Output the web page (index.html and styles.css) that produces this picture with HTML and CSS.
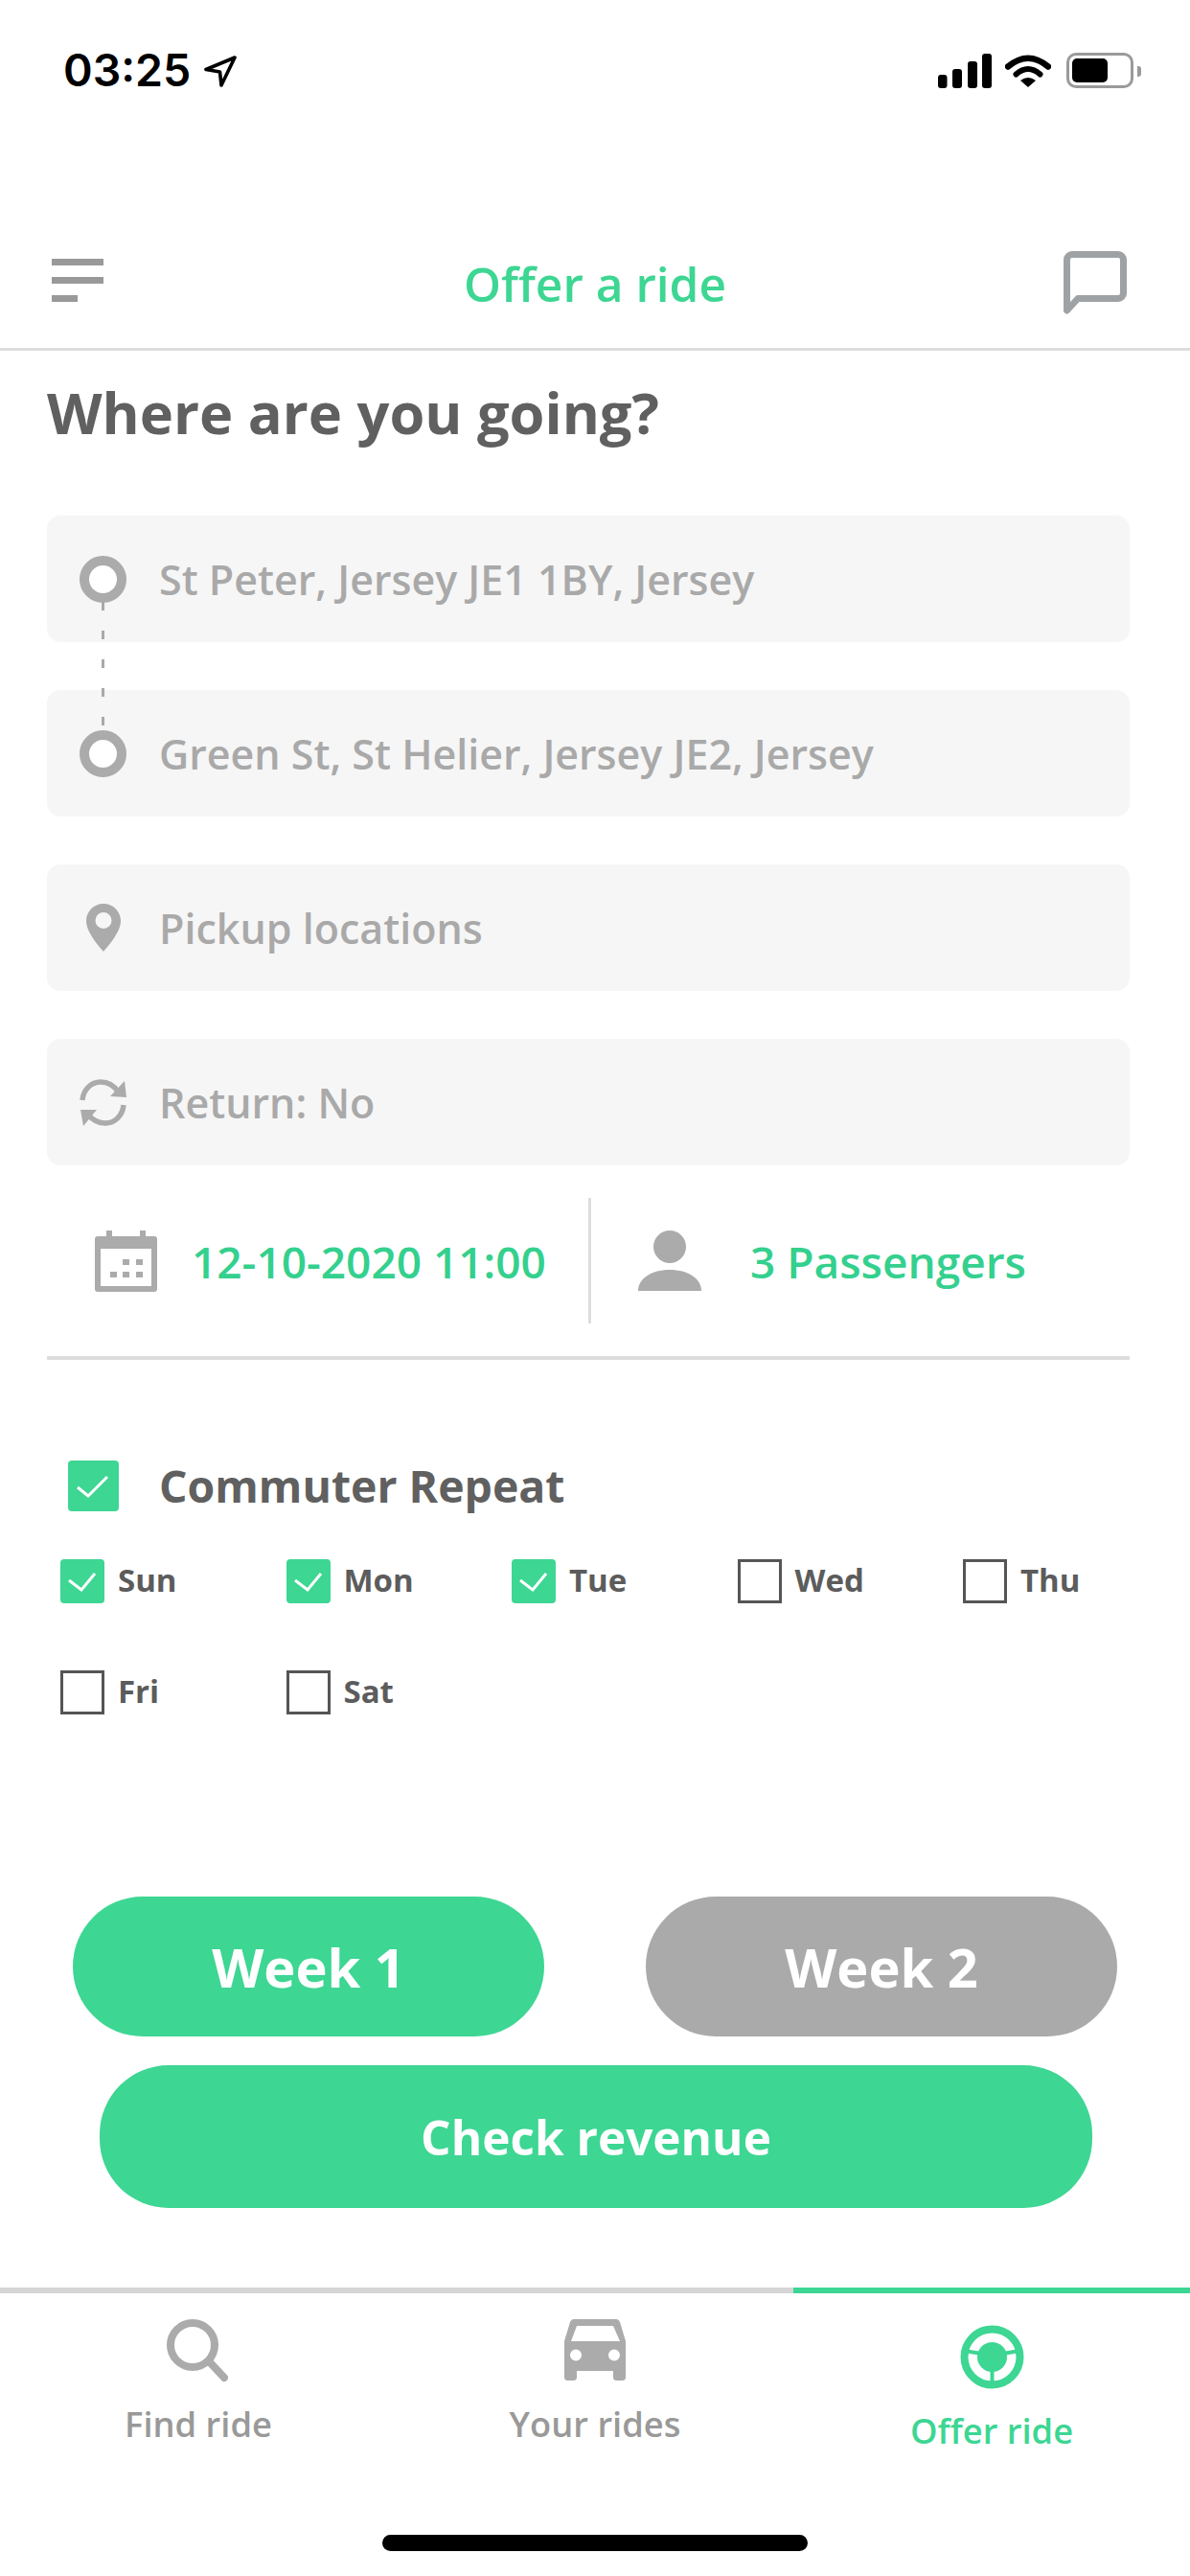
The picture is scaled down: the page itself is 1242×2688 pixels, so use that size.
FILE: index.html
```html
<!DOCTYPE html>
<html lang="en">
<head>
<meta charset="utf-8">
<title>Offer a ride</title>
<link rel="stylesheet" href="styles.css">
</head>
<body>
<div class="screen">
  <div class="status">
    <div class="status-left">
      <span class="time">03:25</span>
      <svg class="ic-loc" viewBox="0 0 34 33"><path d="M32 2 2 14.5l14.5 2.5L18 31Z" fill="none" stroke="#000" stroke-width="3.6" stroke-linejoin="round"/></svg>
    </div>
    <div class="status-right">
      <svg class="ic-signal" viewBox="0 0 57 36"><rect x="0" y="22" width="9.500" height="14" rx="3"/><rect x="15" y="16" width="10" height="20" rx="3"/><rect x="31" y="8" width="10" height="28" rx="3"/><rect x="46" y="0" width="10" height="36" rx="3"/></svg>
      <svg class="ic-wifi" viewBox="0 0 48 34"><path d="M3 12.500Q24-5 45 12.500" fill="none" stroke="#000" stroke-width="6.500" stroke-linecap="round"/><path d="M11.500 20.500Q24 9.500 36.500 20.500" fill="none" stroke="#000" stroke-width="6" stroke-linecap="round"/><path d="M16 27Q24 21 32 27L24 34Z"/></svg>
      <div class="battery"><div class="battery-fill"></div></div>
      <div class="battery-nub"></div>
    </div>
  </div>

  <header class="topbar">
    <div class="menu"><span class="menu-bar"></span><span class="menu-bar"></span><span class="menu-bar short"></span></div>
    <h1 class="title">Offer a ride</h1>
    <svg class="ic-chat" viewBox="0 0 66 66"><path d="M3.500 62V9A5.500 5.500 0 0 1 9 3.500H57A5.500 5.500 0 0 1 62.500 9V44A5.500 5.500 0 0 1 57 49.500H15Z" fill="none" stroke="#9ea2a5" stroke-width="7" stroke-linejoin="round"/></svg>
  </header>

  <main class="content">
    <h2 class="heading">Where are you going?</h2>

    <div class="fields">
      <div class="route-line"></div>
      <div class="field">
        <span class="field-icon"><span class="ring"></span></span>
        <span class="field-text">St Peter, Jersey JE1 1BY, Jersey</span>
      </div>
      <div class="field">
        <span class="field-icon"><span class="ring"></span></span>
        <span class="field-text">Green St, St Helier, Jersey JE2, Jersey</span>
      </div>
      <div class="field">
        <span class="field-icon">
          <svg class="ic-pin" viewBox="0 0 36 50"><path fill-rule="evenodd" fill="#ababab" d="M18 0C8 0 0 8 0 18 0 29 12 43 18 50 24 43 36 29 36 18 36 8 28 0 18 0ZM18 9A8.500 8.500 0 1 1 18 26 8.500 8.500 0 1 1 18 9Z"/></svg>
        </span>
        <span class="field-text">Pickup locations</span>
      </div>
      <div class="field">
        <span class="field-icon">
          <svg class="ic-refresh" viewBox="13 13 49 51"><path d="M16 36C17 25 25 17 35 17 43 17 49 21 53 27" fill="none" stroke="#ababab" stroke-width="5.500"/><path d="M60 16 62 33 45 32Z" fill="#ababab"/><path d="M59 41C58 52 50 60 40 60 32 60 26 56 22 51" fill="none" stroke="#ababab" stroke-width="5.500"/><path d="M14 46 31 46 17 63Z" fill="#ababab"/></svg>
        </span>
        <span class="field-text">Return: No</span>
      </div>
    </div>

    <div class="meta">
      <div class="meta-cell date">
        <svg class="ic-cal" viewBox="0 0 65 64"><path fill-rule="evenodd" fill="#ababab" d="M12 0h6v6h29V0h6v6h9a3 3 0 0 1 3 3v52a3 3 0 0 1-3 3H3a3 3 0 0 1-3-3V9a3 3 0 0 1 3-3h9ZM6 19V58H59V19Z"/><rect x="29" y="30" width="7" height="6" fill="#ababab"/><rect x="43" y="30" width="7" height="6" fill="#ababab"/><rect x="16" y="43" width="7" height="6" fill="#ababab"/><rect x="29" y="43" width="7" height="6" fill="#ababab"/><rect x="43" y="43" width="7" height="6" fill="#ababab"/></svg>
        <span class="meta-text">12-10-2020 11:00</span>
      </div>
      <div class="meta-cell seats">
        <svg class="ic-person" viewBox="0 0 66 63"><circle cx="33" cy="17" r="17" fill="#ababab"/><path d="M0 63C0 50 14 41 33 41 52 41 66 50 66 63Z" fill="#ababab"/></svg>
        <span class="meta-text">3 Passengers</span>
      </div>
    </div>

    <div class="commuter">
      <span class="box box-lg on"><svg viewBox="0 0 53 53"><path d="M10 28 21 37 41 17" fill="none" stroke="#fff" stroke-width="3"/></svg></span>
      <span class="commuter-label">Commuter Repeat</span>
    </div>

    <div class="days">
      <div class="day"><span class="box on"><svg viewBox="0 0 46 46"><path d="M9 22 22 32 36 15" fill="none" stroke="#fff" stroke-width="3"/></svg></span><span class="day-label">Sun</span></div>
      <div class="day"><span class="box on"><svg viewBox="0 0 46 46"><path d="M9 22 22 32 36 15" fill="none" stroke="#fff" stroke-width="3"/></svg></span><span class="day-label">Mon</span></div>
      <div class="day"><span class="box on"><svg viewBox="0 0 46 46"><path d="M9 22 22 32 36 15" fill="none" stroke="#fff" stroke-width="3"/></svg></span><span class="day-label">Tue</span></div>
      <div class="day"><span class="box"></span><span class="day-label">Wed</span></div>
      <div class="day"><span class="box"></span><span class="day-label">Thu</span></div>
      <div class="day"><span class="box"></span><span class="day-label">Fri</span></div>
      <div class="day"><span class="box"></span><span class="day-label">Sat</span></div>
    </div>

    <div class="weeks">
      <div class="btn btn-week green">Week 1</div>
      <div class="btn btn-week grey">Week 2</div>
    </div>
    <div class="btn btn-check green">Check revenue</div>
  </main>

  <nav class="tabs">
    <div class="tab">
      <svg class="ic-search" viewBox="0 0 64 66"><circle cx="27" cy="27" r="23" fill="none" stroke="#ababab" stroke-width="8"/><path d="M45 45 60 61" fill="none" stroke="#ababab" stroke-width="8" stroke-linecap="round"/></svg>
      <span class="tab-label">Find ride</span>
    </div>
    <div class="tab">
      <svg class="ic-car" viewBox="0 0 66 64"><path fill-rule="evenodd" fill="#ababab" d="M11 0H55C57 0 58 1 59 3L65 23V60C65 63 64 64 61 64H56C53 64 52 63 52 60V54H14V60C14 63 13 64 10 64H5C2 64 1 63 1 60V23L7 3C8 1 9 0 11 0ZM14 7 8 23H59L52 7ZM13 31.500A6 6 0 1 0 13 43.500 6 6 0 1 0 13 31.500ZM53 31.500A6 6 0 1 0 53 43.500 6 6 0 1 0 53 31.500Z"/></svg>
      <span class="tab-label">Your rides</span>
    </div>
    <div class="tab active">
      <svg class="ic-wheel" viewBox="0 0 67 67"><circle cx="33.500" cy="33.500" r="29" fill="none" stroke="#3dd693" stroke-width="8"/><circle cx="33.500" cy="33.500" r="15.500" fill="#3dd693"/><path d="M5 27 22 30M62 27 45 30M33.500 44V62" fill="none" stroke="#3dd693" stroke-width="4"/></svg>
      <span class="tab-label">Offer ride</span>
    </div>
  </nav>

  <div class="home-wrap"><div class="home-bar"></div></div>
</div>
</body>
</html>
```

FILE: styles.css
```css
* { box-sizing: border-box; }
html, body { margin: 0; padding: 0; background: #fff; }
.screen {
  width: 1242px;
  height: 2688px;
  overflow: hidden;
  font-family: "Open Sans", "Liberation Sans", sans-serif;
  display: flex;
  flex-direction: column;
}

/* status bar */
.status {
  height: 110px;
  padding: 55px 51px 0 66px;
  display: flex;
  justify-content: space-between;
  align-items: flex-start;
}
.status-left { display: flex; align-items: flex-start; gap: 14px; }
.time {
  font-family: Inter, "Liberation Sans", sans-serif;
  font-weight: 600;
  font-size: 46.500px;
  line-height: 37px;
  color: #000;
}
.ic-loc { width: 34px; height: 33px; margin-top: 3px; }
.status-right { display: flex; align-items: flex-start; }
.ic-signal { width: 57px; height: 36px; margin-top: 1px; margin-left: 0; }
.ic-wifi { width: 48px; height: 34px; margin: 2px 16px 0 13px; }
.battery {
  width: 70px;
  height: 37px;
  border: 3px solid #9a9a9a;
  border-radius: 10px;
  padding: 3px;
}
.battery-fill { width: 37px; height: 100%; background: #000; border-radius: 5px; }
.battery-nub { width: 4px; height: 11px; margin: 14px 0 0 4px; background: #999; border-radius: 0 3px 3px 0; }

/* top bar */
.topbar {
  height: 256px;
  padding: 152px 54px 0;
  border-bottom: 3px solid #ddd;
  display: grid;
  grid-template-columns: 1fr auto 1fr;
  align-items: start;
}
.menu { width: 54px; margin-top: 8px; display: flex; flex-direction: column; gap: 12px; }
.menu-bar { height: 7px; background: #999; }
.menu-bar.short { width: 27px; }
.title {
  margin: 2px 0 0;
  font-size: 49.600px;
  line-height: 65px;
  font-weight: 600;
  color: #3dd693;
}
.ic-chat { width: 66px; height: 66px; justify-self: end; margin-right: 12px; }

/* content */
.content { padding: 0 63px 0 49px; display: flex; flex-direction: column; }
.heading {
  margin: 24px 0 0;
  font-size: 59.600px;
  line-height: 80px;
  font-weight: 700;
  color: #606060;
}
.fields {
  margin-top: 68px;
  width: 1130px;
  display: flex;
  flex-direction: column;
  gap: 50px;
  position: relative;
}
.field {
  height: 132px;
  background: #f6f6f6;
  border-radius: 14px;
  display: flex;
  align-items: center;
}
.field-icon { width: 117px; padding: 0 34px; display: flex; justify-content: center; flex: none; }
.ring { width: 49px; height: 49px; border: 10px solid #ababab; border-radius: 50%; background: #fff; flex: none; }
.ic-pin { width: 36px; height: 50px; flex: none; }
.ic-refresh { width: 49px; height: 51px; flex: none; }
.field-text { font-size: 43px; font-weight: 600; color: #a9a9a9; white-space: nowrap; }
.route-line {
  position: absolute;
  left: 57px;
  top: 90px;
  height: 133px;
  width: 3px;
  background: repeating-linear-gradient(to bottom, #a9a9a9 0 9px, transparent 9px 30px);
  z-index: 1;
}

/* date + seats */
.meta { margin-top: 34px; height: 131px; display: flex; }
.meta-cell { display: flex; align-items: center; }
.date { width: 568px; padding-left: 50px; border-right: 3px solid #ddd; gap: 36px; }
.seats { padding-left: 49px; gap: 51px; }
.ic-cal { width: 65px; height: 64px; flex: none; }
.ic-person { width: 66px; height: 63px; flex: none; }
.meta-text { font-size: 46px; color: #34d08e; white-space: nowrap; font-weight: 600; }

/* commuter */
.commuter {
  margin-top: 34px;
  border-top: 4px solid #ddd;
  width: 1130px;
  padding: 105px 0 0 22px;
  display: flex;
  align-items: center;
  gap: 42px;
}
.commuter-label { font-size: 46.400px; line-height: 53px; font-weight: 700; color: #606060; }
.box {
  width: 46px;
  height: 46px;
  border: 3px solid #555;
  display: block;
  flex: none;
}
.box.on { background: #3dd693; border: 0; border-radius: 4px; }
.box svg { display: block; width: 100%; height: 100%; }
.box-lg { width: 53px; height: 53px; }
.days {
  margin-top: 50px;
  padding-left: 14px;
  display: grid;
  grid-template-columns: repeat(5, 235.500px);
  row-gap: 70px;
}
.day { display: flex; align-items: center; gap: 14px; height: 46px; }
.day-label { font-size: 33px; line-height: 44px; margin-bottom: 2px; font-weight: 700; color: #5c5c5c; }

/* buttons */
.btn {
  display: flex;
  align-items: center;
  justify-content: center;
  color: #fff;
  font-weight: 700;
}
.green { background: #3dd693; }
.grey { background: #aaa; }
.weeks { margin: 190px 0 0 27px; width: 1090px; display: flex; justify-content: space-between; }
.btn-week { width: 492px; height: 146px; border-radius: 73px; font-size: 56px; }
.btn-check { margin: 30px 0 0 55px; width: 1036px; height: 149px; border-radius: 72px; font-size: 49.500px; }

/* tab bar */
.tabs {
  margin-top: 83px;
  display: grid;
  grid-template-columns: 414px 414px 414px;
}
.tab {
  border-top: 6px solid #d5d5d5;
  height: 190px;
  padding-top: 27px;
  display: flex;
  flex-direction: column;
  align-items: center;
}
.tab.active { border-top-color: #3dd693; padding-top: 33px; }
.ic-search { width: 64px; height: 66px; margin-left: -2px; }
.ic-car { width: 66px; height: 64px; margin-bottom: 2px; }
.ic-wheel { width: 67px; height: 67px; }
.tab-label { margin-top: 18px; font-size: 36.300px; line-height: 50px; font-weight: 600; color: #999; }
.tab.active .tab-label { color: #3dd693; }

.home-wrap { flex: 1; display: flex; justify-content: center; padding-top: 68px; }
.home-bar { width: 444px; height: 17px; background: #000; border-radius: 9px; }
```
